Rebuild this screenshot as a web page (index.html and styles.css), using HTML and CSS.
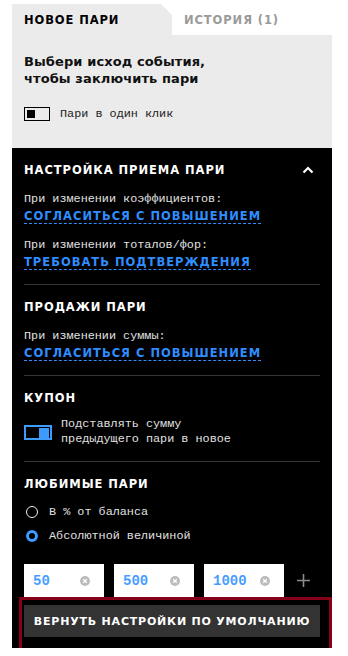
FILE: index.html
```html
<!DOCTYPE html>
<html lang="ru">
<head>
  <meta charset="UTF-8" />
  <meta name="viewport" content="width=device-width, initial-scale=1.0"/>
  <title>Купон</title>
  <link rel="stylesheet" href="styles.css">
</head>
<body>
  <div class="panel">
    <div class="tabs">
      <div class="tab tab-active">Новое пари</div>
      <div class="tab">История (1)</div>
    </div>

    <div class="intro">
      <h2 class="intro-title">Выбери исход события,<br>чтобы заключить пари</h2>
      <div class="switch-row">
        <span class="switch"><span class="switch-knob"></span></span>
        <span class="mono">Пари в один клик</span>
      </div>
    </div>

    <div class="settings">
      <div class="section">
        <div class="section-head">
          <h3>Настройка приема пари</h3>
          <svg class="chevron" width="12" height="8" viewBox="0 0 12 8">
            <polyline points="1.5,6.5 6,2 10.5,6.5" fill="none" stroke="#fff" stroke-width="2.2"/>
          </svg>
        </div>
        <div class="field">
          <div class="mono">При изменении коэффициентов:</div>
          <a class="select-link">Согласиться с повышением</a>
        </div>
        <div class="field">
          <div class="mono">При изменении тоталов/фор:</div>
          <a class="select-link">Требовать подтверждения</a>
        </div>
      </div>

      <div class="section">
        <h3>Продажи пари</h3>
        <div class="field">
          <div class="mono">При изменении суммы:</div>
          <a class="select-link">Согласиться с повышением</a>
        </div>
      </div>

      <div class="section">
        <h3>Купон</h3>
        <div class="switch-row coupon-row">
          <span class="switch switch-on"><span class="switch-knob"></span></span>
          <span class="mono">Подставлять сумму<br>предыдущего пари в новое</span>
        </div>
      </div>

      <div class="section section-last">
        <h3>Любимые пари</h3>
        <div class="radio-list">
          <div class="radio-row"><span class="radio"></span><span class="mono">В % от баланса</span></div>
          <div class="radio-row"><span class="radio radio-on"></span><span class="mono">Абсолютной величиной</span></div>
        </div>
        <div class="amounts">
          <div class="amount">
            <span>50</span>
            <svg class="clear" width="10" height="10" viewBox="0 0 10 10"><circle cx="5" cy="5" r="5" fill="#bcbcbc"/><path d="M3.2 3.2 6.8 6.8M6.8 3.2 3.2 6.8" stroke="#fff" stroke-width="1.3"/></svg>
          </div>
          <div class="amount">
            <span>500</span>
            <svg class="clear" width="10" height="10" viewBox="0 0 10 10"><circle cx="5" cy="5" r="5" fill="#bcbcbc"/><path d="M3.2 3.2 6.8 6.8M6.8 3.2 3.2 6.8" stroke="#fff" stroke-width="1.3"/></svg>
          </div>
          <div class="amount">
            <span>1000</span>
            <svg class="clear" width="10" height="10" viewBox="0 0 10 10"><circle cx="5" cy="5" r="5" fill="#bcbcbc"/><path d="M3.2 3.2 6.8 6.8M6.8 3.2 3.2 6.8" stroke="#fff" stroke-width="1.3"/></svg>
          </div>
          <svg class="add" width="13" height="13" viewBox="0 0 13 13"><path d="M6.5 0V13M0 6.5H13" stroke="#8a8a8a" stroke-width="1.6"/></svg>
        </div>
      </div>

      <div class="reset-frame">
        <button class="reset-btn">Вернуть настройки по умолчанию</button>
      </div>
    </div>
  </div>
</body>
</html>
```

FILE: styles.css
```css
* {
  margin: 0;
  padding: 0;
  box-sizing: border-box;
}

body {
  background: #fff;
  font-family: "DejaVu Sans", sans-serif;
}

.panel {
  width: 320px;
  margin: 4px 0 0 12px;
}

/* вкладки */
.tabs {
  display: flex;
  height: 31px;
}

.tab {
  flex: 1;
  padding-left: 12px;
  display: flex;
  align-items: center;
  font-size: 11.5px;
  font-weight: 700;
  letter-spacing: 0.9px;
  text-transform: uppercase;
  color: #9a9a9a;
  background: #fff;
}

.tab-active {
  flex: 0 0 160px;
  color: #000;
  background: #ebebeb;
  clip-path: polygon(0 0, calc(100% - 11px) 0, 100% 11px, 100% 100%, 0 100%);
}

.intro {
  background: #ebebeb;
  padding: 18px 12px 26px;
}

.intro-title {
  font-size: 13px;
  line-height: 17px;
  font-weight: 700;
  letter-spacing: 0.1px;
  color: #111;
}

.mono {
  font-family: "Liberation Mono", monospace;
  font-size: 11.8px;
  line-height: 16px;
  color: #e0e0e0;
}

.switch-row {
  display: flex;
  align-items: center;
  gap: 10px;
  margin-top: 19px;
}

.intro .mono {
  color: #222;
}

.switch {
  width: 26px;
  height: 14px;
  border: 1.5px solid #000;
  padding: 1.5px 2px;
  display: flex;
}

.switch-knob {
  width: 8px;
  height: 8px;
  background: #000;
}

.switch-on {
  width: 28px;
  height: 15px;
  border: 2px solid #3d9bff;
  padding: 1px;
  justify-content: flex-end;
}

.switch-on .switch-knob {
  width: 10px;
  height: 10px;
  background: #3d9bff;
}

/* настройки */
.settings {
  background: #000;
  padding: 0 12px;
}

.section {
  padding: 14px 0;
  border-bottom: 1px solid #363636;
}

.section-last {
  border-bottom: none;
  padding-bottom: 0;
}

.section h3 {
  font-size: 11.5px;
  line-height: 16px;
  font-weight: 700;
  letter-spacing: 0.95px;
  text-transform: uppercase;
  color: #fff;
}

.section-head {
  display: flex;
  justify-content: space-between;
  align-items: center;
  padding-right: 6px;
}

.field {
  margin-top: 13px;
}

.select-link {
  display: block;
  width: fit-content;
  margin-top: 2px;
  font-size: 11.5px;
  line-height: 14px;
  font-weight: 700;
  letter-spacing: 1px;
  text-transform: uppercase;
  color: #2f8dff;
  border-bottom: 1px dashed #2f8dff;
}

.coupon-row {
  margin-top: 11px;
  gap: 9px;
}

.coupon-row .mono {
  line-height: 15px;
}

.radio-list {
  display: flex;
  flex-direction: column;
  gap: 8px;
  margin-top: 12px;
}

.radio-row {
  display: flex;
  align-items: center;
  gap: 11px;
  padding-left: 2px;
}

.radio {
  width: 12px;
  height: 12px;
  border: 1.5px solid #eee;
  border-radius: 50%;
}

.radio-on {
  border: 3px solid #3d9bff;
}

.amounts {
  display: flex;
  align-items: center;
  gap: 10px;
  margin-top: 20px;
}

.amount {
  width: 80px;
  height: 33px;
  background: #fff;
  display: flex;
  align-items: center;
  justify-content: space-between;
  padding: 0 14px 0 9px;
  font-family: "Liberation Mono", monospace;
  font-size: 14px;
  font-weight: 700;
  color: #4a9dff;
}

.add {
  margin-left: 3px;
}

.reset-frame {
  margin: 0 -12px -4px -5px;
  border: 3px solid #870019;
  background: #000;
  padding: 5px 9px 12px 2px;
}

.reset-btn {
  width: 100%;
  height: 32px;
  border: none;
  background: #333;
  color: #fff;
  font-family: "DejaVu Sans", sans-serif;
  font-size: 11px;
  font-weight: 700;
  letter-spacing: 0.8px;
  text-transform: uppercase;
}
```
